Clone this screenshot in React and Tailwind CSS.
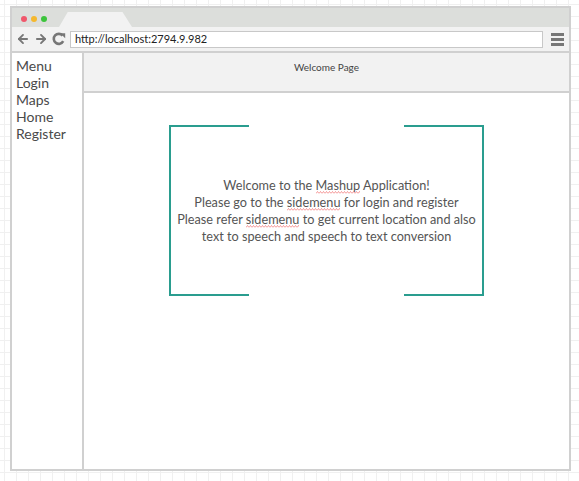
import React, { useId } from 'react';
import { ArrowLeft, ArrowRight } from 'lucide-react';

function Spell({ children }) {
  const id = useId().replace(/:/g, '');
  return (
    <span className="relative inline-block">
      {children}
      <svg className="absolute left-0 bottom-[0px] w-full h-[3px]" preserveAspectRatio="none">
        <defs>
          <pattern id={id} width="3" height="3" patternUnits="userSpaceOnUse">
            <path d="M0 2.5 L1.5 0.5 L3 2.5" fill="none" stroke="#f07070" strokeWidth="0.7" />
          </pattern>
        </defs>
        <rect width="100%" height="3" fill={`url(#${id})`} />
      </svg>
    </span>
  );
}

function Reload() {
  return (
    <svg width="14" height="14" viewBox="0 0 14 14" className="ml-[4px]">
      <path d="M11.2 9.2 A5 5 0 1 1 10.6 3.6" fill="none" stroke="#777" strokeWidth="2.6" />
      <path d="M8.2 1.2 L13.2 1.2 L13.2 6.2 Z" fill="#777" />
    </svg>
  );
}

export default function App() {
  const menu = ['Menu', 'Login', 'Maps', 'Home', 'Register'];

  return (
    <div className="w-[579px] h-[481px] pl-[10px] pt-[6px] bg-white bg-[linear-gradient(#f0f0f0_1px,transparent_1px),linear-gradient(90deg,#f0f0f0_1px,transparent_1px)] bg-[length:12px_12px] bg-[position:4px_4px] font-['Lato','Liberation_Sans',sans-serif]">
      <div className="w-[561px] h-[465px] border-2 border-[#d0d0d0] bg-white flex flex-col">
        {/* title bar */}
        <div className="h-[19px] bg-[#dcdedb] flex items-end">
          <div className="flex items-center gap-[4px] pl-[9px] h-[19px] pb-[2px] pt-[5px]">
            <span className="w-[6px] h-[6px] rounded-full bg-[#f0576b]" />
            <span className="w-[6px] h-[6px] rounded-full bg-[#f5b82e]" />
            <span className="w-[6px] h-[6px] rounded-full bg-[#3cc43c]" />
          </div>
          <div className="ml-[12px] w-[73px] h-[15px] bg-[#f2f2f2] [clip-path:polygon(12%_0,87%_0,100%_100%,0_100%)]" />
        </div>

        {/* toolbar */}
        <div className="h-[26px] bg-[#f2f2f2] border-b-2 border-[#d0d0d0] flex items-center pl-[4px] pr-[5px]">
          <ArrowLeft size={14} strokeWidth={3.2} className="text-[#777]" />
          <ArrowRight size={14} strokeWidth={3.2} className="text-[#777] ml-[4px]" />
          <Reload />
          <div className="ml-[4px] w-[473px] h-[17px] bg-white border border-[#c8c8c8] flex items-center pl-[4px] text-[11px] text-[#222]">
            http://localhost:2794.9.982
          </div>
          <div className="ml-[8px] flex flex-col gap-[2px]">
            <span className="block w-[13px] h-[3px] bg-[#777]" />
            <span className="block w-[13px] h-[3px] bg-[#777]" />
            <span className="block w-[13px] h-[3px] bg-[#777]" />
          </div>
        </div>

        {/* body */}
        <div className="flex-1 flex">
          <div className="w-[72px] border-r-2 border-[#d0d0d0] pt-[4px] pl-[4px] text-[14px] leading-[17px] text-[#4a4a4a]">
            {menu.map((m) => (
              <div key={m}>{m}</div>
            ))}
          </div>
          <div className="flex-1 flex flex-col">
            <div className="h-[40px] bg-[#f2f2f2] border-b-2 border-[#d0d0d0] pt-[8px] text-center text-[10px] leading-[12px] text-[#444]">
              Welcome Page
            </div>
            <div className="mt-[32px] mx-auto w-[315px] h-[171px] border-l-2 border-r-2 border-[#2a9d8f] flex flex-col">
              <div className="flex justify-between">
                <span className="w-[78px] h-[2px] bg-[#2a9d8f]" />
                <span className="w-[78px] h-[2px] bg-[#2a9d8f]" />
              </div>
              <div className="flex-1 flex flex-col items-center justify-center text-center text-[12.7px] leading-[17px] text-[#555]">
                <div>Welcome to the <Spell>Mashup</Spell> Application!</div>
                <div>Please go to the <Spell>sidemenu</Spell> for login and register</div>
                <div>Please refer <Spell>sidemenu</Spell> to get current location and also</div>
                <div>text to speech and speech to text conversion</div>
              </div>
              <div className="flex justify-between">
                <span className="w-[78px] h-[2px] bg-[#2a9d8f]" />
                <span className="w-[78px] h-[2px] bg-[#2a9d8f]" />
              </div>
            </div>
          </div>
        </div>
      </div>
    </div>
  );
}
